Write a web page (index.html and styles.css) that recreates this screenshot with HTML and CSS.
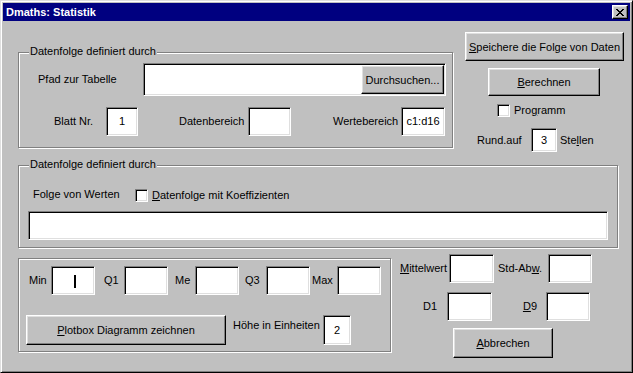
FILE: index.html
```html
<!doctype html>
<html>
  <head>
    <meta charset="utf-8" />
    <link rel="stylesheet" href="styles.css">
  </head>
  <body>
    <div class="window">
      <div class="titlebar">
        <span class="title">Dmaths: Statistik</span>
        <button class="close-btn" aria-label="Schließen">
          <svg width="8" height="7" viewBox="0 0 8 7" shape-rendering="crispEdges">
            <path fill="#000" d="M0 0h2v1H0z M6 0h2v1H6z M1 1h2v1H1z M5 1h2v1H5z M2 2h4v1H2z M3 3h2v1H3z M2 4h4v1H2z M1 5h2v1H1z M5 5h2v1H5z M0 6h2v1H0z M6 6h2v1H6z"/>
          </svg>
        </button>
      </div>

      <div class="client">
        <div class="top-row">
          <div class="group group-source">
            <span class="legend">Datenfolge definiert durch</span>
            <div class="path-row">
              <span class="lbl lbl-path">Pfad zur Tabelle</span>
              <div class="field path-field">
                <button class="btn browse-btn">Durchsuchen...</button>
              </div>
            </div>
            <div class="range-row">
              <span class="lbl lbl-blatt">Blatt Nr.</span>
              <div class="field box-blatt">1</div>
              <span class="lbl lbl-daten">Datenbereich</span>
              <div class="field box-daten"></div>
              <span class="lbl lbl-werte">Wertebereich</span>
              <div class="field box-werte">c1:d16</div>
            </div>
          </div>

          <div class="side-panel">
            <button class="btn save-btn"><u>S</u>peichere die Folge von Daten</button>
            <button class="btn calc-btn"><u>B</u>erechnen</button>
            <div class="check-row prog-row">
              <span class="check"></span>
              <span>Pro<u>g</u>ramm</span>
            </div>
            <div class="round-row">
              <span class="lbl lbl-round">Rund.auf</span>
              <div class="field round-field">3</div>
              <span class="lbl lbl-stellen">Ste<u>l</u>len</span>
            </div>
          </div>
        </div>

        <div class="group group-values">
          <span class="legend">Datenfolge definiert durch</span>
          <div class="check-row values-row">
            <span class="lbl lbl-folge">Folge von Werten</span>
            <span class="check"></span>
            <span><u>D</u>atenfolge mit Koeffizienten</span>
          </div>
          <div class="field values-field"></div>
        </div>

        <div class="bottom-row">
          <div class="group group-plot">
            <div class="stats-row">
              <span class="lbl lbl-min">Min</span>
              <div class="field box-stat"><span class="caret"></span></div>
              <span class="lbl lbl-q1">Q1</span>
              <div class="field box-stat"></div>
              <span class="lbl lbl-me">Me</span>
              <div class="field box-stat"></div>
              <span class="lbl lbl-q3">Q3</span>
              <div class="field box-stat"></div>
              <span class="lbl lbl-max">Max</span>
              <div class="field box-stat"></div>
            </div>
            <div class="plot-row">
              <button class="btn plot-btn"><u>P</u>lotbox Diagramm zeichnen</button>
              <span class="lbl lbl-hoehe">Höhe in Einheiten</span>
              <div class="field height-field">2</div>
            </div>
          </div>

          <div class="stats-side">
            <div class="side-row">
              <span class="lbl lbl-mittel"><u>M</u>ittelwert</span>
              <div class="field box-wide"></div>
              <span class="lbl lbl-std">Std-Ab<u>w</u>.</span>
              <div class="field box-narrow"></div>
            </div>
            <div class="side-row side-row-2">
              <span class="lbl lbl-d1">D1</span>
              <div class="field box-wide"></div>
              <span class="lbl lbl-d9"><u>D</u>9</span>
              <div class="field box-narrow"></div>
            </div>
            <button class="btn abort-btn"><u>A</u>bbrechen</button>
          </div>
        </div>
      </div>
    </div>
  </body>
</html>
```

FILE: styles.css
```css
* {
  margin: 0;
  padding: 0;
  box-sizing: border-box;
}

body {
  font-family: 'Liberation Sans', Arial, sans-serif;
  font-size: 11px;
  line-height: 13px;
  color: #000;
  background: #c0c0c0;
}

u {
  text-underline-offset: 1px;
}

/* window frame */

.window {
  width: 633px;
  height: 373px;
  padding: 2px;
  background: #c0c0c0;
  border: 1px solid;
  border-color: #dfdfdf #000 #000 #dfdfdf;
  box-shadow: inset 1px 1px #fff, inset -1px -1px #808080;
}

.titlebar {
  height: 18px;
  display: flex;
  align-items: center;
  justify-content: space-between;
  padding: 0 2px 0 3px;
  background: #000080;
  color: #fff;
}

.title {
  font-weight: bold;
  line-height: 18px;
}

.close-btn {
  width: 16px;
  height: 14px;
  display: flex;
  align-items: center;
  justify-content: center;
  background: #c0c0c0;
  border: 1px solid;
  border-color: #fff #000 #000 #fff;
  box-shadow: inset -1px -1px #808080, inset 1px 1px #dfdfdf;
}

.close-btn svg {
  display: block;
  margin-top: 1px;
}

.client {
  padding: 11px 0 0 15px;
}

/* controls */

.btn {
  display: flex;
  align-items: center;
  justify-content: center;
  font-family: inherit;
  font-size: 11px;
  color: #000;
  background: #c0c0c0;
  border: 1px solid;
  border-color: #fff #000 #000 #fff;
  box-shadow: inset -1px -1px #808080, inset 1px 1px #dfdfdf;
  white-space: nowrap;
}

.field {
  display: flex;
  align-items: center;
  justify-content: center;
  background: #fff;
  border: 1px solid;
  border-color: #808080 #fff #fff #808080;
  box-shadow: inset 1px 1px #000, inset -1px -1px #dfdfdf;
  white-space: nowrap;
}

.check {
  width: 13px;
  height: 13px;
  flex-shrink: 0;
  background: #fff;
  border: 1px solid;
  border-color: #808080 #fff #fff #808080;
  box-shadow: inset 1px 1px #000, inset -1px -1px #dfdfdf;
}

.check-row {
  display: flex;
  align-items: center;
  gap: 4px;
  height: 13px;
  white-space: nowrap;
}

.lbl {
  flex-shrink: 0;
  white-space: nowrap;
}

.group {
  position: relative;
  border: 1px solid #808080;
  box-shadow: inset 1px 1px #fff, 1px 1px #fff;
}

.legend {
  position: absolute;
  top: -8px;
  left: 10px;
  padding: 0 1px;
  background: #c0c0c0;
  white-space: nowrap;
}

/* top area */

.top-row {
  display: flex;
  height: 133px;
}

.group-source {
  width: 435px;
  height: 96px;
  margin-top: 20px;
  padding: 10px 0 0 19px;
}

.path-row {
  display: flex;
  align-items: center;
}

.lbl-path {
  width: 105px;
}

.path-field {
  width: 303px;
  height: 33px;
  padding: 1px;
  justify-content: flex-end;
}

.browse-btn {
  width: 83px;
  height: 29px;
}

.range-row {
  display: flex;
  align-items: center;
  margin-top: 11px;
  padding-left: 16px;
}

.range-row .field {
  height: 29px;
}

.lbl-blatt {
  width: 52px;
}

.box-blatt {
  width: 32px;
}

.lbl-daten {
  width: 69px;
  margin-left: 41px;
}

.box-daten {
  width: 43px;
}

.lbl-werte {
  width: 68px;
  margin-left: 42px;
}

.box-werte {
  width: 44px;
}

.side-panel {
  width: 159px;
  margin-left: 12px;
  display: flex;
  flex-direction: column;
  align-items: flex-start;
}

.save-btn {
  width: 159px;
  height: 29px;
}

.calc-btn {
  width: 112px;
  height: 28px;
  margin: 7px 0 0 23px;
}

.prog-row {
  margin: 8px 0 0 32px;
}

.round-row {
  display: flex;
  align-items: center;
  margin: 11px 0 0 12px;
}

.lbl-round {
  width: 54px;
}

.round-field {
  width: 26px;
  height: 24px;
}

.lbl-stellen {
  margin-left: 3px;
}

/* values group */

.group-values {
  width: 600px;
  height: 83px;
  padding: 23px 0 0 14px;
}

.lbl-folge {
  width: 98px;
  margin-top: -3px;
}

.values-field {
  width: 580px;
  height: 29px;
  margin: 9px 0 0 -5px;
}

/* bottom area */

.bottom-row {
  display: flex;
  align-items: flex-start;
  margin-top: 6px;
}

.group-plot {
  width: 373px;
  height: 94px;
  margin-top: 4px;
  padding: 7px 0 0 10px;
}

.stats-row {
  display: flex;
  align-items: center;
}

.box-stat {
  width: 44px;
  height: 29px;
}

.caret {
  width: 2px;
  height: 13px;
  margin: 1px 0 0 4px;
  background: #000;
}

.lbl-min {
  width: 22px;
}

.lbl-q1 {
  width: 29px;
  padding-left: 9px;
}

.lbl-me {
  width: 27px;
  padding-left: 7px;
}

.lbl-q3 {
  width: 27px;
  padding-left: 6px;
}

.lbl-max {
  width: 27px;
  padding-left: 2px;
}

.plot-row {
  display: flex;
  align-items: flex-start;
  margin: 20px 0 0 -3px;
}

.plot-btn {
  width: 200px;
  height: 30px;
}

.lbl-hoehe {
  width: 90px;
  margin: 4px 0 0 7px;
}

.height-field {
  width: 28px;
  height: 30px;
}

.stats-side {
  margin-left: 7px;
  display: flex;
  flex-direction: column;
  align-items: flex-start;
}

.side-row {
  display: flex;
  align-items: center;
  height: 29px;
}

.side-row .field {
  height: 29px;
}

.side-row-2 {
  margin-top: 9px;
}

.lbl-mittel {
  width: 51px;
  padding-left: 2px;
}

.lbl-std {
  width: 54px;
  padding-left: 4px;
}

.lbl-d1 {
  width: 49px;
  padding-right: 10px;
  text-align: right;
}

.lbl-d9 {
  width: 54px;
  padding-right: 9px;
  text-align: right;
}

.box-wide {
  width: 45px;
}

.box-narrow {
  width: 44px;
}

.abort-btn {
  width: 100px;
  height: 30px;
  margin: 7px 0 0 55px;
}
```
